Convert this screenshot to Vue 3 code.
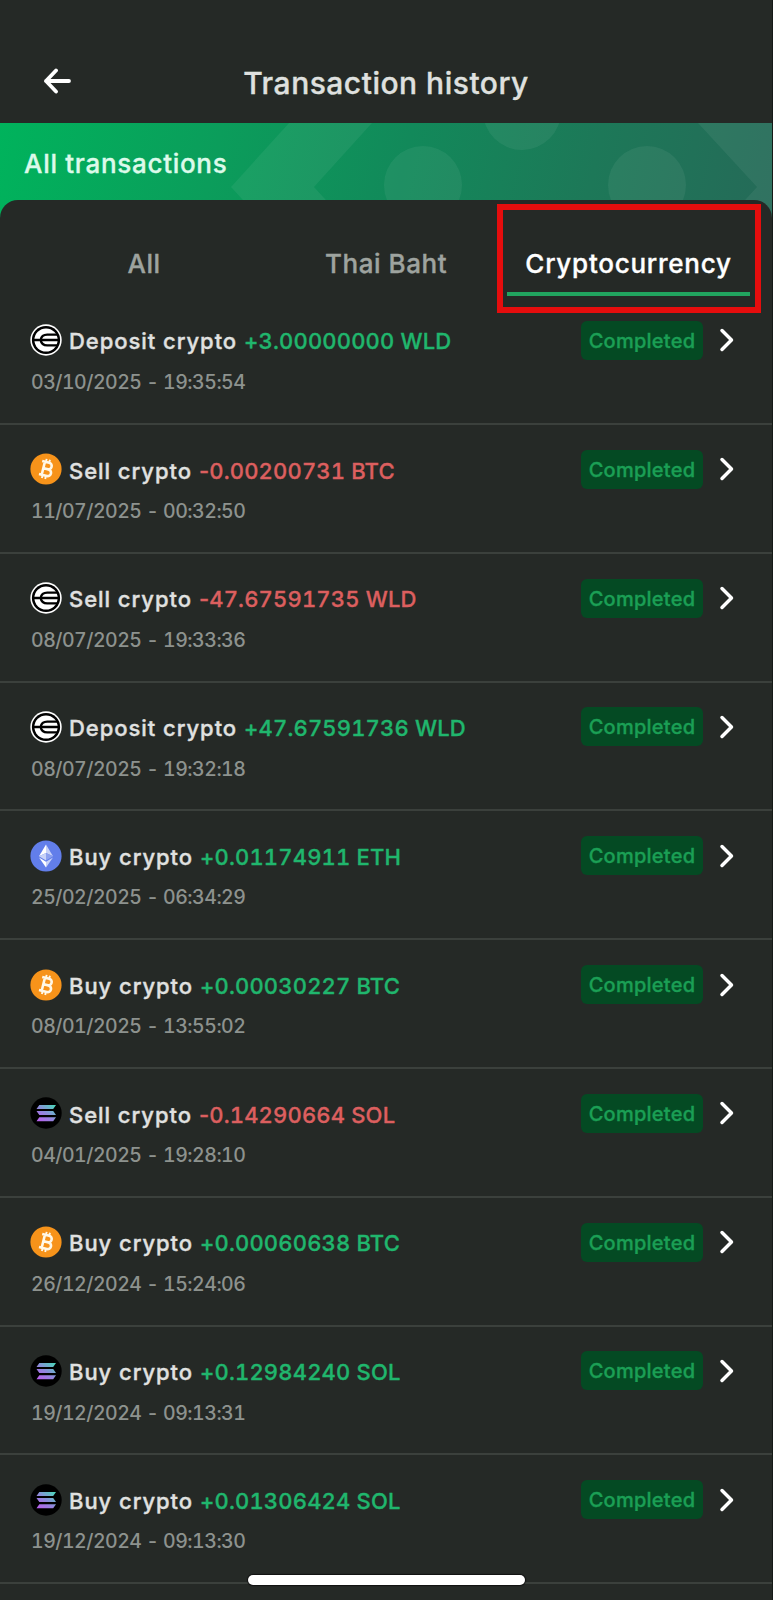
<script setup>
const rows = [
  { coin: 'wld', label: 'Deposit crypto', amount: '+3.00000000 WLD', date: '03/10/2025 - 19:35:54' },
  { coin: 'btc', label: 'Sell crypto', amount: '-0.00200731 BTC', date: '11/07/2025 - 00:32:50' },
  { coin: 'wld', label: 'Sell crypto', amount: '-47.67591735 WLD', date: '08/07/2025 - 19:33:36' },
  { coin: 'wld', label: 'Deposit crypto', amount: '+47.67591736 WLD', date: '08/07/2025 - 19:32:18' },
  { coin: 'eth', label: 'Buy crypto', amount: '+0.01174911 ETH', date: '25/02/2025 - 06:34:29' },
  { coin: 'btc', label: 'Buy crypto', amount: '+0.00030227 BTC', date: '08/01/2025 - 13:55:02' },
  { coin: 'sol', label: 'Sell crypto', amount: '-0.14290664 SOL', date: '04/01/2025 - 19:28:10' },
  { coin: 'btc', label: 'Buy crypto', amount: '+0.00060638 BTC', date: '26/12/2024 - 15:24:06' },
  { coin: 'sol', label: 'Buy crypto', amount: '+0.12984240 SOL', date: '19/12/2024 - 09:13:31' },
  { coin: 'sol', label: 'Buy crypto', amount: '+0.01306424 SOL', date: '19/12/2024 - 09:13:30' },
]
</script>

<template>
  <main class="screen">
    <header class="topbar">
      <svg class="back" viewBox="0 0 30 26" fill="none" stroke="#fff" stroke-width="3.8" stroke-linecap="round" stroke-linejoin="round">
        <path d="M26 13H3M13 2.5L3 13l10 10.5" />
      </svg>
      <h1>Transaction history</h1>
    </header>

    <section class="banner">
      <svg class="pattern" viewBox="0 0 773 100" preserveAspectRatio="none" fill="#fff" fill-opacity=".06">
        <path d="M289 0H372L314 64L347 100H264L231 64Z" />
        <path d="M698 0H773V100H724L757 64Z" />
        <circle cx="423" cy="62" r="39" />
        <circle cx="522" cy="-12" r="39" />
        <circle cx="647" cy="62" r="39" />
      </svg>
      <h2>All transactions</h2>
    </section>

    <section class="sheet">
      <nav class="tabs">
        <span class="tab all">All</span>
        <span class="tab">Thai Baht</span>
        <span class="tab active">Cryptocurrency</span>
        <span class="highlight"></span>
      </nav>

      <ul class="list">
        <li v-for="(row, i) in rows" :key="i" class="row">
          <div class="line">
            <svg class="coin" viewBox="0 0 32 32">
              <g v-if="row.coin === 'wld'" fill="none">
                <circle cx="16" cy="16" r="15.7" fill="#fff" />
                <circle cx="16" cy="16" r="14.1" fill="#000" />
                <circle cx="16" cy="16" r="11.6" fill="#fff" />
                <path d="M4 16H28M27 10.6H17.2C13.6 10.6 11.2 12.8 10.6 16C11.2 19.2 13.6 21.4 17.2 21.4H27" stroke="#000" stroke-width="2.3" />
              </g>
              <g v-else-if="row.coin === 'btc'">
                <circle cx="16" cy="16" r="15.6" fill="#f7931a" />
                <g transform="rotate(14 16 16)" fill="none" stroke="#fff8e8" stroke-width="2.6">
                  <path d="M10.4 9.2H17.6a3.3 3.3 0 0 1 0 6.6H13.2M17.3 15.8h1.2a3.4 3.4 0 0 1 0 6.8H10.4M13.2 9.2v13.4" />
                  <path d="M14.2 6v3M17.6 6v3M14.2 22.6v3.2M17.6 22.6v3.2" stroke-width="1.9" />
                </g>
              </g>
              <g v-else-if="row.coin === 'eth'">
                <circle cx="16" cy="16" r="15.6" fill="#627eea" />
                <path d="M16 4.5V13L23 16.2Z" fill="#c8d2f8" />
                <path d="M16 4.5L9 16.2L16 13Z" fill="#fff" />
                <path d="M16 13L9 16.2L16 20.4Z" fill="#c8d2f8" />
                <path d="M16 13V20.4L23 16.2Z" fill="#8da1ef" />
                <path d="M9 17.6L16 27.4V21.8Z" fill="#fff" />
                <path d="M23 17.6L16 27.4V21.8Z" fill="#c8d2f8" />
              </g>
              <g v-else>
                <defs>
                  <linearGradient :id="'sol' + i" gradientUnits="userSpaceOnUse" x1="8" y1="25" x2="22" y2="7">
                    <stop offset="0" stop-color="#bd5cf0" />
                    <stop offset=".5" stop-color="#9088dc" />
                    <stop offset="1" stop-color="#4fd2bb" />
                  </linearGradient>
                </defs>
                <circle cx="16" cy="16" r="15.7" fill="#000" />
                <path d="M9.3 8H26L23.2 12H6.5ZM6.5 14.1H23.2L26 18.1H9.3ZM9.3 20.2H26L23.2 24.2H6.5Z" :fill="`url(#sol${i})`" />
              </g>
            </svg>
            <span class="label">{{ row.label }}</span>
            <span class="amount" :class="{ minus: row.amount[0] === '-' }"><span class="sign">{{ row.amount[0] }}</span>{{ row.amount.slice(1) }}</span>
            <span class="badge">Completed</span>
            <svg class="chevron" viewBox="0 0 16 24" fill="none" stroke="#fff" stroke-width="3.5" stroke-linecap="round" stroke-linejoin="round">
              <path d="M3 2.5L12.5 12L3 21.5" />
            </svg>
          </div>
          <div class="date">{{ row.date }}</div>
        </li>
      </ul>
    </section>
    <div class="home"></div>
  </main>
</template>

<style>
html, body { background: #252926; }
</style>

<style scoped>
.screen {
  position: relative;
  box-sizing: border-box;
  width: 773px;
  height: 1600px;
  overflow: hidden;
  background: #252926;
  border-right: 1px solid #151a17;
  font-family: Inter, "Liberation Sans", sans-serif;
}
h1, h2, ul { margin: 0; padding: 0; font-weight: 500; list-style: none; }
h1, h2, .tab, .label, .amount, .badge { -webkit-text-stroke: .35px currentColor; }
.topbar { height: 123px; position: relative; box-sizing: border-box; padding-top: 63px; text-align: center; }
.back { position: absolute; left: 43px; top: 68px; width: 30px; height: 26px; }
h1 { font-size: 30px; line-height: 40px; color: #dfe0df; letter-spacing: .5px; }
.banner {
  position: relative;
  height: 100px;
  background: linear-gradient(103deg, #00b35c 0%, #0b9d5b 28%, #12895a 52%, #1d7858 76%, #256a58 100%);
}
.pattern { position: absolute; inset: 0; width: 773px; height: 100px; }
h2 { position: relative; padding: 24px 0 0 24px; font-size: 26px; line-height: 34px; letter-spacing: .7px; color: #dcfaea; }
.sheet { position: relative; margin-top: -23px; background: #252926; border-radius: 18px 18px 0 0; }
.tabs { position: relative; height: 100px; display: grid; grid-template-columns: 265px 242px 243px; }
.tab { height: 96px; box-sizing: border-box; padding-top: 46px; font-size: 26px; line-height: 36px; font-weight: 500; letter-spacing: .55px; color: #9ea39f; text-align: center; white-space: nowrap; }
.all { padding-left: 23px; }
.active { color: #fff; letter-spacing: .75px; border-bottom: 4px solid #21a45f; }
.highlight { position: absolute; left: 497px; top: 4px; width: 264px; height: 109px; box-sizing: border-box; border: 6px solid #e50d0d; }
.list { padding-top: 20px; }
.row { height: 128.8px; box-sizing: border-box; border-bottom: 2px solid #3b403c; }
.list .row:first-child { height: 105px; }
.row:not(:first-child) { padding-top: 24.4px; }
.line { height: 40px; display: flex; align-items: center; padding-left: 30px; padding-right: 37px; white-space: nowrap; }
.coin { width: 32px; height: 32px; margin-right: 7px; flex: none; }
.label, .amount { font-size: 22px; line-height: 30px; font-weight: 500; padding-top: 2.6px; }
.label { color: #e0e1e0; margin-right: 7px; letter-spacing: .95px; }
.amount { color: #20b66d; letter-spacing: .17px; font-variant-numeric: tabular-nums; }
.minus { color: #dc5f5f; }
.minus .sign { font-variant-numeric: normal; }
.badge { margin-left: auto; width: 122px; height: 39px; box-sizing: border-box; padding-top: 1px; border-radius: 6px; background: #044a23; color: #1b9f55; font-size: 20px; line-height: 38px; font-weight: 500; letter-spacing: .25px; text-align: center; }
.chevron { width: 16px; height: 24px; margin-left: 16px; }
.date { padding-left: 31px; margin-top: 8.6px; font-size: 19.5px; line-height: 26px; letter-spacing: -.5px; color: #8d928e; font-variant-numeric: tabular-nums; }
.home { position: absolute; left: 248px; top: 1575px; width: 277px; height: 10px; border-radius: 5px; background: #fff; box-shadow: 0 0 1px 1px #111; }
</style>
